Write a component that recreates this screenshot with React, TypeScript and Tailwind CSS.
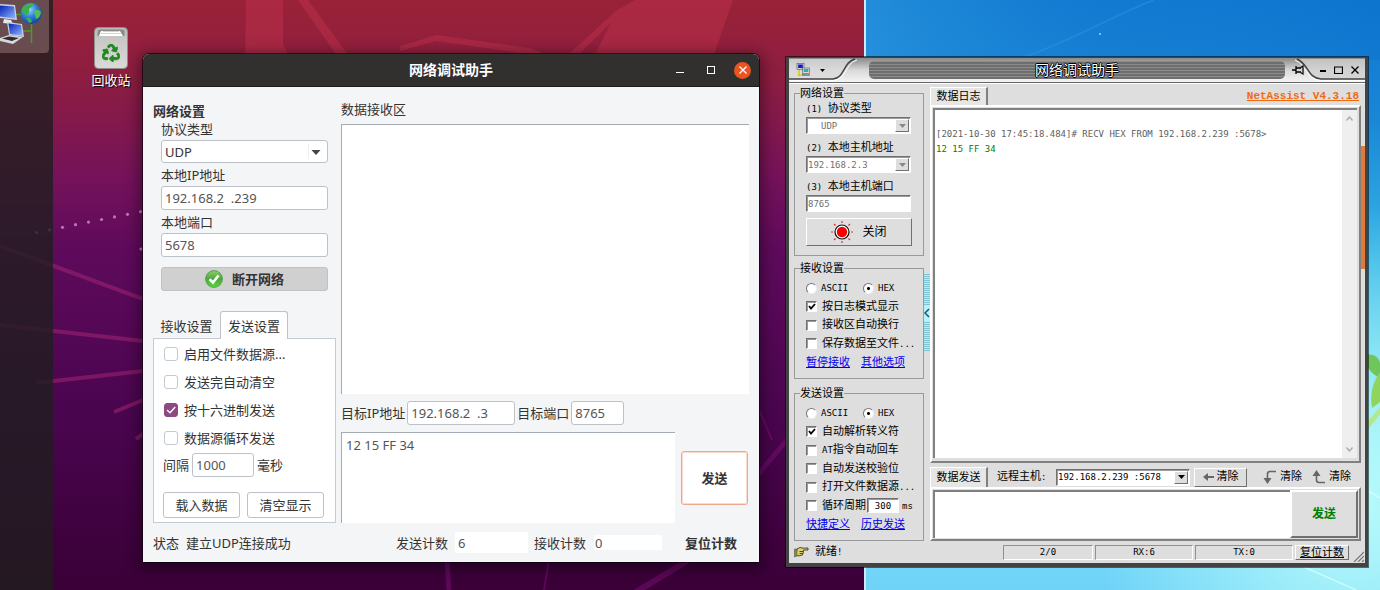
import { useState } from "react";
import type { ReactNode } from "react";
import { FaRecycle } from "react-icons/fa";

const ubuntuFont = "font-['Noto_Sans','Noto_Sans_CJK_SC',sans-serif]";
const winFont = "font-['DejaVu_Sans_Mono','Noto_Sans_CJK_SC',monospace]";

/* ---------- Wallpapers ---------- */

function UbuntuWallpaper() {
  const dots = Array.from({ length: 9 }, (_, i) => ({ x: 36.5 + i * 13, y: 232.5 - i * 2.6 }));
  return (
    <svg className="absolute inset-0 h-full w-full" viewBox="0 0 864 590" preserveAspectRatio="xMinYMin slice" aria-hidden="true">
      <defs>
        <linearGradient id="ub" x1="0" y1="0" x2="0" y2="1">
          <stop offset="0" stopColor="#9a2237" />
          <stop offset="0.14" stopColor="#8c1d42" />
          <stop offset="0.3" stopColor="#75125a" />
          <stop offset="0.42" stopColor="#5f0a5c" />
          <stop offset="0.7" stopColor="#4a054f" />
          <stop offset="1" stopColor="#3a0037" />
        </linearGradient>
      </defs>
      <rect width="864" height="590" fill="url(#ub)" />
      <g fill="#ba2f4a" opacity="0.55">
        <path d="M246 0H283V44L292 62H245Z" />
        <path d="M635 0H733L712 60H592L611 23L580 53H570L617 10Z" />
        <path d="M298 0H308L352 60H340Z" />
        <path d="M400 46L436 35L530 48L543 53H520L436 41L400 51Z" />
      </g>
      <g stroke="#9b2270" strokeWidth="4" opacity="0.6">
        <path d="M0 246L143 299" />
        <path d="M0 325L143 341" />
        <path d="M36 383L143 371" />
        <path d="M114 412L143 400" />
        <path d="M136 439L146 432" />
      </g>
      <g stroke="#7d0f76" opacity="0.5" fill="none">
        <path d="M447 560L449 590" strokeWidth="5" />
        <path d="M549 560L544 590" strokeWidth="2" />
        <path d="M692 558L636 592" strokeWidth="6" />
        <path d="M755 478L787 440" strokeWidth="5" />
        <path d="M755 400L772 440" strokeWidth="2" />
      </g>
      <g fill="#c070b8">
        {dots.map((d) => (
          <circle key={d.x} cx={d.x} cy={d.y} r="1.6" />
        ))}
        <circle cx="141" cy="249" r="1.6" />
      </g>
    </svg>
  );
}

function SevenWallpaper() {
  return (
    <svg className="absolute inset-0 h-full w-full" viewBox="0 0 516 590" preserveAspectRatio="none" aria-hidden="true">
      <defs>
        <linearGradient id="sky" x1="0" y1="0" x2="0" y2="1">
          <stop offset="0" stopColor="#0f78d0" />
          <stop offset="0.2" stopColor="#1a86d6" />
          <stop offset="0.45" stopColor="#39b8e8" />
          <stop offset="0.75" stopColor="#7fe3f5" />
          <stop offset="1" stopColor="#6fd3f8" />
        </linearGradient>
        <linearGradient id="glow" x1="0" y1="0" x2="1" y2="0">
          <stop offset="0" stopColor="#2f9be0" stopOpacity="0.6" />
          <stop offset="0.5" stopColor="#1a80d4" stopOpacity="0.2" />
          <stop offset="1" stopColor="#0b6fcc" stopOpacity="0.4" />
        </linearGradient>
        <radialGradient id="light" cx="0.95" cy="0.85" r="0.5">
          <stop offset="0" stopColor="#b8fbfb" />
          <stop offset="1" stopColor="#b8fbfb" stopOpacity="0" />
        </radialGradient>
      </defs>
      <rect width="516" height="590" fill="url(#sky)" />
      <rect width="516" height="60" fill="url(#glow)" />
      <rect width="516" height="590" fill="url(#light)" />
      <path d="M160 57C210 40 260 10 290 0" stroke="#3f9fe4" strokeWidth="2" fill="none" opacity="0.3" />
      <circle cx="236" cy="34" r="1" fill="#9fd4f5" />
      <path d="M500 355Q514 352 516 364V378Q502 372 500 355Z" fill="#6fc65a" />
      <path d="M516 372Q504 388 508 408L516 402Z" fill="#8fd45c" />
      <path d="M500 425L516 407V414L502 432Z" fill="#b4e890" />
      <path d="M502 490L516 498M440 567L492 590" stroke="#d2ffff" strokeWidth="1.5" opacity="0.8" />
      <rect width="2" height="590" fill="#cfe9fa" />
    </svg>
  );
}

/* ---------- Icons ---------- */

function NetworkIcon() {
  return (
    <svg className="h-[48px] w-[46px]" viewBox="0 0 46 48" aria-hidden="true">
      <defs>
        <linearGradient id="scr" x1="0" y1="0" x2="1" y2="1">
          <stop offset="0" stopColor="#0a22b8" />
          <stop offset="1" stopColor="#8fb8ff" />
        </linearGradient>
        <radialGradient id="globe" cx="0.4" cy="0.3" r="0.75">
          <stop offset="0" stopColor="#9fdcff" />
          <stop offset="0.5" stopColor="#2b7fd8" />
          <stop offset="1" stopColor="#0b3f9c" />
        </radialGradient>
      </defs>
      <path d="M16 14.5H22M31.5 22V43M22 31H31" stroke="#4f9a1c" strokeWidth="1.5" fill="none" />
      <path d="M0 4L15 5L17 20L0 18Z" fill="#c9d2de" />
      <path d="M0 5.5L14 6.5L15.5 18.5L0 16.5Z" fill="url(#scr)" />
      <path d="M4 19L11 20L13 24L3 23Z" fill="#e6e9ee" />
      <circle cx="31" cy="13.5" r="10.500" fill="url(#globe)" />
      <path d="M22 8Q28 3 34 4Q31 8 29 9Q30 14 26 15Q21 13 22 8Z" fill="#3fae4c" />
      <path d="M34 11Q38 8 41 12Q40 18 36 19Q35 15 34 11Z" fill="#58bc4e" />
      <path d="M26 18Q31 17 32 22L29 23Z" fill="#3fae4c" />
      <path d="M7 22L22 24L24 37L9 35Z" fill="#c9d2de" />
      <path d="M8.5 23.5L21 25L22.5 35.5L10 34Z" fill="url(#scr)" />
      <path d="M0 38L9 35L23 37L13 44L0 41Z" fill="#d5d8dc" />
      <path d="M2 38.5L9 36.5L19 38L12 41Z" fill="#2c2c30" />
    </svg>
  );
}

function TrashIcon() {
  return (
    <span className="relative flex h-[42px] w-[34px] items-center justify-center">
      <svg className="absolute inset-0 h-full w-full" viewBox="0 0 34 42" aria-hidden="true">
        <defs>
          <linearGradient id="bin" x1="0" y1="0" x2="0" y2="1">
            <stop offset="0" stopColor="#b9b9b7" />
            <stop offset="0.3" stopColor="#c8c8c7" />
            <stop offset="1" stopColor="#dadad9" />
          </linearGradient>
        </defs>
        <rect x="0.5" y="0.5" width="33" height="41" rx="4" fill="url(#bin)" stroke="#8e8e8c" />
        <path d="M3.5 9V4.5Q3.5 2.5 6 2.5H28Q30.5 2.5 30.5 4.5V9Z" fill="#8a8a88" />
        <path d="M5 9L7 4H26L29 9Z" fill="#fff" />
        <path d="M7 6.5H27M9 4.5H25" stroke="#c8c8c8" strokeWidth="0.8" />
      </svg>
      <FaRecycle className="relative mt-[10px] h-[18px] w-[18px] stroke-[#1f8a1c] stroke-[24px] text-[#1f8a1c]" aria-hidden="true" />
    </span>
  );
}

function OkIcon() {
  return (
    <svg className="h-[18px] w-[18px]" viewBox="0 0 18 18" aria-hidden="true">
      <defs>
        <linearGradient id="ok" x1="0" y1="0" x2="0" y2="1">
          <stop offset="0" stopColor="#8ccf6c" />
          <stop offset="0.5" stopColor="#4aa83c" />
          <stop offset="1" stopColor="#5cd83c" />
        </linearGradient>
      </defs>
      <circle cx="9" cy="9" r="8.4" fill="url(#ok)" stroke="#3d9a33" strokeWidth="0.8" />
      <path d="M4.5 9.2L8 12.5L13.5 5.5" stroke="#fff" strokeWidth="2.6" fill="none" />
    </svg>
  );
}

function LampIcon() {
  return (
    <svg className="h-[22px] w-[22px]" viewBox="0 0 22 22" aria-hidden="true">
      <g stroke="#e03030" strokeWidth="1.2">
        <path d="M11 0V2M11 20V22M0 11H2M20 11H22M3 3L4.5 4.5M17.5 17.5L19 19M3 19L4.5 17.5M17.5 4.5L19 3" />
      </g>
      <circle cx="11" cy="11" r="7" fill="#fff" stroke="#111" strokeWidth="1.2" />
      <circle cx="11" cy="11" r="5.2" fill="#fb0000" />
    </svg>
  );
}

function HandIcon() {
  return (
    <svg className="h-[12px] w-[15px]" viewBox="0 0 15 12" aria-hidden="true">
      <path d="M3 3L6 1.5L9 2.2L14 2V4H9.500V5.500L8.500 9L4 10L2 8.500Z" fill="#e0d468" stroke="#222" strokeWidth="0.8" />
      <path d="M5.5 5.5H9M5.5 7.5H8.5" stroke="#222" strokeWidth="0.8" />
      <path d="M0.5 3H3V10L0.5 11Z" fill="#8c8c2c" stroke="#555" strokeWidth="0.6" />
    </svg>
  );
}

function AppIcon() {
  return (
    <svg className="h-[14px] w-[15px]" viewBox="0 0 15 14" aria-hidden="true">
      <path d="M3 7V12H8" stroke="#c8c800" strokeWidth="1.2" fill="none" />
      <rect x="1" y="0.5" width="7" height="6" fill="#d0d0d0" stroke="#555" strokeWidth="0.6" />
      <rect x="2.2" y="1.5" width="4.6" height="3.5" fill="#1414d0" />
      <rect x="6.5" y="5" width="7" height="5.5" fill="#d8d8d8" stroke="#555" strokeWidth="0.6" />
      <rect x="7.7" y="6" width="4.6" height="3" fill="#18b8b8" />
      <path d="M6 12H14" stroke="#444" />
      <circle cx="3" cy="12" r="1.2" fill="#d8d000" />
    </svg>
  );
}

/* ---------- Ubuntu window ---------- */

const uInput =
  "h-6 rounded-[3px] border border-[#bcc2c8] bg-white px-[3px] text-[13px] text-[#555] outline-none";

function UCheck({ label, checked = false }: { label: string; checked?: boolean }) {
  const [on, setOn] = useState(checked);
  return (
    <label className="flex h-5 items-center gap-[6px]">
      <span className="relative flex h-[14px] w-[14px]">
        <input
          type="checkbox"
          checked={on}
          onChange={() => setOn(!on)}
          className="h-[14px] w-[14px] appearance-none rounded-[3px] border border-[#c3c9d0] bg-white checked:border-[#8d4a80] checked:bg-[#8d4a80]"
        />
        {on && (
          <svg className="pointer-events-none absolute inset-0" viewBox="0 0 14 14" aria-hidden="true">
            <path d="M3 7L6 9.8L11.2 4" stroke="#fff" strokeWidth="1.3" fill="none" />
          </svg>
        )}
      </span>
      {label}
    </label>
  );
}

function UbuntuWindow() {
  return (
    <section
      aria-label="网络调试助手"
      className={`absolute left-[143px] top-[54px] flex w-[616px] flex-col rounded-t-md bg-[#f3f5f7] text-[13px] leading-[18px] text-[#333] shadow-[0_3px_14px_4px_rgba(0,0,0,0.4),0_0_0_1px_rgba(20,0,20,0.7)] ${ubuntuFont}`}
    >
      <header className="relative flex h-[33px] items-center justify-end gap-[17px] rounded-t-md border-b border-[#1d1b1b] bg-[#322f2f] pr-2 text-white">
        <h1 className="pointer-events-none absolute inset-x-0 text-center text-[14px] font-bold">网络调试助手</h1>
        <button aria-label="最小化" className="flex h-4 w-4 items-center justify-center">
          <svg className="h-2 w-2" viewBox="0 0 8 8" aria-hidden="true"><path d="M0 6.5H8" stroke="#fff" /></svg>
        </button>
        <button aria-label="最大化" className="flex h-4 w-3 items-center justify-center">
          <svg className="h-2 w-2" viewBox="0 0 8 8" aria-hidden="true"><rect x="0.5" y="0.5" width="7" height="7" fill="none" stroke="#fff" /></svg>
        </button>
        <button aria-label="关闭窗口" className="flex h-[17px] w-[17px] items-center justify-center rounded-full bg-[#e95420]">
          <svg className="h-2 w-2" viewBox="0 0 8 8" aria-hidden="true"><path d="M0.5 0.5L7.5 7.5M7.5 0.5L0.5 7.5" stroke="#fff" strokeWidth="1.3" /></svg>
        </button>
      </header>

      <div className="flex gap-[5px] px-[10px]">
        <div className="flex w-[183px] flex-col pt-[15px]">
          <h2 className="font-bold">网络设置</h2>
          <div className="flex flex-col pl-2 pr-[8px]">
            <label htmlFor="u-proto">协议类型</label>
            <div className="relative mt-[2px]">
              <select id="u-proto" className="h-[23px] w-full appearance-none rounded-[3px] border border-[#bcc2c8] bg-white px-[3px] text-[13px] leading-4 text-[#333]">
                <option>UDP</option>
                <option>TCP</option>
              </select>
              <span className="pointer-events-none absolute bottom-1 right-[19px] top-1 w-px bg-[#eceef0]" />
              <svg className="pointer-events-none absolute right-[7px] top-[10px] h-[5px] w-[10px]" viewBox="0 0 10 5" aria-hidden="true">
                <path d="M0.5 0H9.5L5 5Z" fill="#444" />
              </svg>
            </div>
            <label htmlFor="u-ip" className="mt-[3px]">本地IP地址</label>
            <input id="u-ip" className={`mt-[2px] ${uInput}`} defaultValue="192.168.2  .239" />
            <label htmlFor="u-port" className="mt-[3px]">本地端口</label>
            <input id="u-port" className={`mt-[2px] ${uInput}`} defaultValue="5678" />
            <button className="mt-[10px] flex h-6 items-center justify-center gap-[9px] rounded-[3px] border border-[#c2c2c2] bg-[#d0d0d0] font-bold">
              <OkIcon />
              断开网络
            </button>
          </div>

          <div role="tablist" className="mt-5 flex h-[27px] items-end">
            <button role="tab" aria-selected="false" className="h-6 w-[67px]">接收设置</button>
            <button role="tab" aria-selected="true" className="relative -mb-px h-7 w-[68px] rounded-t-[3px] border border-b-0 border-[#bcc2c8] bg-white">发送设置</button>
          </div>
          <div role="tabpanel" className="flex h-[185px] flex-col border border-[#c6cbd1] bg-white pt-[5px]">
            <div className="flex flex-col gap-2 pl-[10px]">
              <UCheck label="启用文件数据源..." />
              <UCheck label="发送完自动清空" />
              <UCheck label="按十六进制发送" checked />
              <UCheck label="数据源循环发送" />
            </div>
            <div className="mt-[5px] flex items-center gap-[3px] pl-[9px]">
              <label htmlFor="u-gap">间隔</label>
              <input id="u-gap" className={`w-[62px] ${uInput}`} defaultValue="1000" />
              <span>毫秒</span>
            </div>
            <div className="mt-[15px] flex gap-[7px] pl-[9px]">
              <button className="h-[26px] w-[77px] rounded-[3px] border border-[#bcc2c8] bg-white">载入数据</button>
              <button className="h-[26px] w-[77px] rounded-[3px] border border-[#bcc2c8] bg-white">清空显示</button>
            </div>
          </div>
        </div>

        <div className="flex min-w-0 flex-1 flex-col pt-[13px]">
          <label htmlFor="u-recv">数据接收区</label>
          <textarea id="u-recv" readOnly className="mt-[6px] min-h-0 flex-1 resize-none border-l border-t border-[#a5abb2] bg-white outline-none" />
          <div className="my-[7px] flex h-6 items-center gap-[2px]">
            <label htmlFor="u-tip">目标IP地址</label>
            <input id="u-tip" className={`w-[108px] ${uInput}`} defaultValue="192.168.2  .3" />
            <label htmlFor="u-tport">目标端口</label>
            <input id="u-tport" className={`w-[53px] ${uInput}`} defaultValue="8765" />
          </div>
          <div className="flex h-[91px] items-center justify-between pr-px">
            <textarea aria-label="发送数据" className="h-full w-[334px] resize-none border-l border-t border-[#a5abb2] bg-white px-1 py-[3px] text-[#555] outline-none" defaultValue="12 15 FF 34" />
            <button className="h-[54px] w-[67px] rounded-[3px] border border-[#f0a58c] bg-white font-bold outline outline-1 -outline-offset-2 outline-[#fbd9cd]">发送</button>
          </div>
        </div>
      </div>

      <footer className="flex h-[39px] items-center pl-[10px] pr-[22px]">
        <span className="w-[33px]">状态</span>
        <span className="flex-1">建立UDP连接成功</span>
        <label htmlFor="u-tx" className="mr-[7px]">发送计数</label>
        <input id="u-tx" readOnly className="h-[21px] w-[73px] bg-white px-[3px] text-[#555] outline-none" defaultValue="6" />
        <label htmlFor="u-rx" className="ml-[6px] mr-2">接收计数</label>
        <input id="u-rx" readOnly className="h-[15px] w-[68px] bg-white px-px text-[#555] outline-none" defaultValue="0" />
        <button className="ml-[23px] font-bold">复位计数</button>
      </footer>
    </section>
  );
}

/* ---------- Windows-style window ---------- */

const sunken = "border border-b-white border-l-[#707070] border-r-white border-t-[#707070] bg-white shadow-[inset_1px_1px_0_#9a9a9a]";
const raised = "border border-b-[#707070] border-l-white border-r-[#707070] border-t-white bg-[#dedede]";
const cell = "border border-b-white border-l-[#909090] border-r-white border-t-[#909090] text-center";
const tab = "flex h-full w-[58px] items-center justify-center border-l border-r-2 border-t border-l-white border-r-[#808080] border-t-white bg-[#e6e6e6]";

function Latin({ children }: { children: ReactNode }) {
  return <span className="whitespace-pre text-[9px]">{children}</span>;
}

function Group({ title, className, children }: { title: string; className: string; children: ReactNode }) {
  return (
    <fieldset className={`m-0 flex min-w-0 flex-col border border-[#9a9a9a] px-[11px] ${className}`}>
      <legend className="-ml-[6px] h-3 p-0 leading-[14px]">{title}</legend>
      {children}
    </fieldset>
  );
}

function WinCombo({ id, value, wide = false, indent = false }: { id: string; value: string; wide?: boolean; indent?: boolean }) {
  return (
    <div className={wide ? "relative w-[134px]" : "relative mt-[2px] w-[105px]"}>
      <select
        id={id}
        className={`h-[17px] w-full appearance-none text-[9px] leading-3 ${indent ? "pl-[14px]" : "pl-px"} ${wide ? "text-black" : "text-[#707070]"} ${sunken}`}
      >
        <option>{value}</option>
      </select>
      <span className={`pointer-events-none absolute bottom-[2px] right-[2px] top-[2px] flex w-[14px] items-center justify-center ${raised}`}>
        <svg className="h-1 w-[7px]" viewBox="0 0 7 4" aria-hidden="true">
          <path d="M0 0H7L3.5 4Z" fill={wide ? "#000" : "#888"} />
        </svg>
      </span>
    </div>
  );
}

function WCheck({ children, checked = false }: { children: ReactNode; checked?: boolean }) {
  const [on, setOn] = useState(checked);
  return (
    <label className="flex h-[18px] items-center gap-[5px] whitespace-nowrap">
      <span className="relative flex h-[11px] w-[11px]">
        <input type="checkbox" checked={on} onChange={() => setOn(!on)} className={`h-[11px] w-[11px] appearance-none ${sunken}`} />
        {on && (
          <svg className="pointer-events-none absolute inset-0" viewBox="0 0 11 11" aria-hidden="true">
            <path d="M3 5L5 7.5L9 3" stroke="#000" strokeWidth="1.8" fill="none" />
          </svg>
        )}
      </span>
      <span className="leading-[14px]">{children}</span>
    </label>
  );
}

function Radios({ name }: { name: string }) {
  const radio =
    "h-[11px] w-[11px] appearance-none rounded-full border border-b-[#eee] border-l-[#777] border-r-[#eee] border-t-[#777] bg-white checked:bg-[radial-gradient(circle,#000_0_1px,#fff_2px)]";
  return (
    <div className="flex h-[18px] items-center text-[9px]">
      <label className="flex w-[57px] items-center gap-1">
        <input type="radio" name={name} className={radio} />
        ASCII
      </label>
      <label className="flex items-center gap-1">
        <input type="radio" name={name} defaultChecked className={radio} />
        HEX
      </label>
    </div>
  );
}

function Links({ a, b }: { a: string; b: string }) {
  return (
    <div className="flex gap-[11px] leading-[14px] text-[#0000ee] underline">
      <a href="#">{a}</a>
      <a href="#">{b}</a>
    </div>
  );
}

function NetAssistWindow() {
  return (
    <section
      aria-label="NetAssist"
      className={`absolute left-[786px] top-[57px] flex w-[582px] flex-col border-[3px] border-b-4 border-t border-[#434343] bg-[#dedede] text-[11px] leading-3 text-black shadow-[0_0_0_1px_rgba(0,0,0,0.55)] ${winFont}`}
    >
      <header className="flex h-[25px] items-start border-b border-[#666] bg-gradient-to-b from-[#8a8a8a] via-[#d8d8d8] to-[#f4f4f4]">
        <div className="relative flex h-full w-[80px] items-center gap-[9px] pl-[7px]">
          <svg className="absolute inset-0 h-full w-full" viewBox="0 0 80 24" preserveAspectRatio="none" aria-hidden="true">
            <path d="M0 21H44C56 20 54 4 66 1H0Z" fill="#d9d9d9" opacity="0.8" />
            <path d="M0 21H44C56 20 54 4 66 1" stroke="#444" strokeWidth="1.5" fill="none" />
            <path d="M0 22.5H45C58 21 56 5 68 2" stroke="#fff" fill="none" />
          </svg>
          <span className="relative"><AppIcon /></span>
          <svg className="relative h-[3px] w-[5px]" viewBox="0 0 5 3" aria-hidden="true"><path d="M0 0H5L2.5 3Z" /></svg>
        </div>
        <div className="mt-[3px] flex h-[18px] flex-1 items-center justify-center rounded-[5px] bg-[repeating-linear-gradient(to_bottom,#8c8c8c_0_1px,#6e6e6e_1px_3px)] pb-[2px]">
          <h1 className="font-['Noto_Sans_CJK_SC',sans-serif] text-[14px] leading-4 text-white [text-shadow:1px_0_#000,-1px_0_#000,0_1px_#000,0_-1px_#000]">网络调试助手</h1>
        </div>
        <div className="relative flex h-full w-[80px] items-center justify-between pl-[7px] pr-[6px]">
          <svg className="absolute inset-0 h-full w-full" viewBox="0 0 80 24" preserveAspectRatio="none" aria-hidden="true">
            <path d="M12 1C24 6 22 20 36 21H80V1Z" fill="#cfcfcf" opacity="0.8" />
            <path d="M12 1C24 6 22 20 36 21H80" stroke="#444" strokeWidth="1.5" fill="none" />
            <path d="M10 2C22 7 20 21 35 22.5H80" stroke="#fff" fill="none" />
          </svg>
          <button aria-label="置顶" className="relative flex">
            <svg className="h-[10px] w-[12px]" viewBox="0 0 12 10" aria-hidden="true">
              <path d="M0 5H4M4 1V9M4 3H9M4 7H9" stroke="#000" strokeWidth="1.3" fill="none" />
              <path d="M8.500 2.500L11 1V9L8.500 7.500" fill="none" stroke="#000" strokeWidth="1.2" />
            </svg>
          </button>
          <div className="relative flex items-center gap-2">
            <button aria-label="最小化" className="flex"><svg className="h-2 w-[6px]" viewBox="0 0 6 8" aria-hidden="true"><path d="M0 5H6" stroke="#000" strokeWidth="2" /></svg></button>
            <button aria-label="最大化" className="flex"><svg className="h-2 w-[9px]" viewBox="0 0 9 8" aria-hidden="true"><path d="M0.5 1V7.500H8.500V1M0 1H9" fill="none" stroke="#000" strokeWidth="1.2" /></svg></button>
            <button aria-label="关闭窗口" className="flex"><svg className="h-2 w-2" viewBox="0 0 8 8" aria-hidden="true"><path d="M0.5 0.5L7.5 7.5M7.5 0.5L0.5 7.5" stroke="#000" strokeWidth="1.3" /></svg></button>
          </div>
        </div>
      </header>

      <div className="flex border-t border-white pl-[5px]">
        <div className="flex w-[130px] flex-col pt-[3px]">
          <Group title="网络设置" className="h-[169px]">
            <label htmlFor="w-proto" className="mt-1"><Latin>(1) </Latin>协议类型</label>
            <WinCombo id="w-proto" value="UDP" indent />
            <label htmlFor="w-ip" className="mt-2"><Latin>(2) </Latin>本地主机地址</label>
            <WinCombo id="w-ip" value="192.168.2.3" />
            <label htmlFor="w-port" className="mt-2"><Latin>(3) </Latin>本地主机端口</label>
            <input id="w-port" className={`mt-[2px] h-[17px] w-[105px] px-px text-[9px] text-[#707070] outline-none ${sunken}`} defaultValue="8765" />
            <button className={`mt-[6px] flex h-7 w-[106px] items-center justify-center gap-[9px] ${raised}`}>
              <LampIcon />
              <span className="text-[12px]">关闭</span>
            </button>
          </Group>
          <Group title="接收设置" className="mt-[6px] h-[117px]">
            <div className="mb-[3px] mt-[5px] flex h-[74px] flex-col justify-between">
              <Radios name="w-recv" />
              <WCheck checked>按日志模式显示</WCheck>
              <WCheck>接收区自动换行</WCheck>
              <WCheck>保存数据至文件<Latin>...</Latin></WCheck>
            </div>
            <Links a="暂停接收" b="其他选项" />
          </Group>
          <Group title="发送设置" className="mt-[8px] h-[154px]">
            <div className="mb-[3px] mt-[5px] flex h-[111px] flex-col justify-between">
              <Radios name="w-send" />
              <WCheck checked>自动解析转义符</WCheck>
              <WCheck><Latin>AT</Latin>指令自动回车</WCheck>
              <WCheck>自动发送校验位</WCheck>
              <WCheck>打开文件数据源<Latin>...</Latin></WCheck>
              <div className="flex items-center">
                <WCheck>循环周期</WCheck>
                <input aria-label="循环周期 ms" className={`ml-px h-[15px] w-8 text-center text-[9px] outline-none ${sunken}`} defaultValue="300" />
                <span className="ml-[3px] text-[9px]">ms</span>
              </div>
            </div>
            <Links a="快捷定义" b="历史发送" />
          </Group>
        </div>

        <div className="flex w-[6px] flex-col pt-[190px]">
          <button aria-label="折叠侧栏" className="flex h-[78px] items-center justify-center bg-[repeating-linear-gradient(to_bottom,#7fc4d4_0_1px,#c4e6ee_1px_2px)]">
            <svg className="h-[16px] w-[6px] bg-[#bdf0f8]" viewBox="0 0 6 16" aria-hidden="true"><path d="M5 4L1 8L5 12" stroke="#0a5a78" strokeWidth="1.5" fill="none" /></svg>
          </button>
        </div>

        <div className="flex min-w-0 flex-1 flex-col pt-[3px]">
          <div className="flex h-[18px] items-center justify-between pr-[2px]">
            <h2 className={tab}>数据日志</h2>
            <a href="#" className="font-['Liberation_Mono',monospace] text-[11px] font-bold text-[#f26a10] underline">NetAssist V4.3.18</a>
          </div>
          <div className="flex h-[358px] flex-col border-2 border-b-[#808080] border-l-white border-r-[#808080] border-t-white p-px pb-[3px] pr-[2px]">
            <div className="flex flex-1 border-l-2 border-t-2 border-[#808080] bg-white">
              <div className="flex-1 whitespace-pre pl-px pt-[2px] text-[9px] leading-[15px]">
                <p>&nbsp;</p>
                <p className="text-[#606060]">[2021-10-30 17:45:18.484]# RECV HEX FROM 192.168.2.239 :5678&gt;</p>
                <p className="text-[#008000]">12 15 FF 34</p>
              </div>
              <div className="flex w-[15px] flex-col items-center justify-between bg-[#efefef] py-[6px]">
                <svg className="h-[5px] w-[7px]" viewBox="0 0 7 5" aria-hidden="true"><path d="M0.5 4.5L3.5 1L6.5 4.5" stroke="#aaa" strokeWidth="1.4" fill="none" /></svg>
                <svg className="h-[5px] w-[7px]" viewBox="0 0 7 5" aria-hidden="true"><path d="M0.5 0.5L3.5 4L6.5 0.5" stroke="#aaa" strokeWidth="1.4" fill="none" /></svg>
              </div>
            </div>
          </div>

          <div className="mt-[4px] flex h-[20px] items-center">
            <h2 className={tab}>数据发送</h2>
            <label htmlFor="w-host" className="ml-[9px] w-[59px]">远程主机<Latin>:</Latin></label>
            <WinCombo id="w-host" value="192.168.2.239 :5678" wide />
            <button className={`ml-1 flex h-[19px] w-[53px] items-center justify-center gap-[3px] ${raised}`}>
              <svg className="h-2 w-[11px]" viewBox="0 0 11 8" aria-hidden="true"><path d="M0 4L5 0V8ZM4 3H11V5H4Z" fill="#666" /></svg>
              清除
            </button>
            <button className="ml-[16px] flex items-center gap-[3px]">
              <svg className="h-[14px] w-[14px]" viewBox="0 0 14 14" aria-hidden="true"><path d="M13 1.5H7Q4.5 1.5 4.5 4V9" stroke="#666" strokeWidth="1.6" fill="none" /><path d="M0.5 8H8.5L4.5 14Z" fill="#666" /></svg>
              清除
            </button>
            <button className="ml-[10px] flex items-center gap-[3px]">
              <svg className="h-[14px] w-[14px]" viewBox="0 0 14 14" aria-hidden="true"><path d="M13 12.5H7Q4.5 12.5 4.5 10V5" stroke="#666" strokeWidth="1.6" fill="none" /><path d="M0.5 6H8.5L4.5 0Z" fill="#666" /></svg>
              清除
            </button>
          </div>
          <div className="flex h-[54px] border-2 border-b-[#808080] border-l-white border-r-[#808080] border-t-white p-px">
            <textarea aria-label="发送内容" className="min-w-0 flex-1 resize-none border-l-2 border-t-2 border-[#808080] bg-white text-[9px] outline-none" />
            <button className="w-[68px] border-2 border-b-[#707070] border-l-white border-r-[#707070] border-t-white bg-[#dedede] text-[12px] font-bold text-[#008000]">发送</button>
          </div>
        </div>
        <div className="flex w-[4px] flex-col pt-[62px]">
          <div className="h-[123px] bg-[#e07b3c]" />
        </div>
      </div>

      <footer className="flex h-[22px] items-center pl-[5px] pr-px">
        <HandIcon />
        <span className="ml-[6px] flex-1">就绪<Latin>!</Latin></span>
        <div className="flex h-[15px] gap-[2px] text-[9px] leading-[13px]">
          <span className={`w-[90px] ${cell}`}>2/0</span>
          <span className={`w-[98px] ${cell}`}>RX:6</span>
          <span className={`w-[98px] ${cell}`}>TX:0</span>
          <button className={`w-[54px] text-[11px] leading-[13px] underline ${raised}`}>复位计数</button>
        </div>
        <svg className="ml-1 mt-2 h-[11px] w-[11px]" viewBox="0 0 11 11" aria-hidden="true">
          <path d="M1 11L11 1M5 11L11 5M9 11L11 9" stroke="#777" strokeWidth="1.2" />
        </svg>
      </footer>
    </section>
  );
}

export default function App() {
  return (
    <main className="relative flex h-screen min-h-[570px] w-full overflow-hidden">
      <div className="relative flex w-[62.6%]">
        <UbuntuWallpaper />
        <nav aria-label="Dock" className="relative w-[53px] bg-[#1f1e1e]/80">
          <button aria-label="网络调试助手" className="flex h-[53px] w-[49px] items-start rounded-br-[4px] bg-[#9a7a7c]/50">
            <NetworkIcon />
          </button>
        </nav>
        <button className={`relative ml-[31px] mt-[27px] flex w-[54px] flex-col items-center self-start text-[13px] leading-5 text-white [text-shadow:1px_1px_1px_#000] ${ubuntuFont}`}>
          <TrashIcon />
          <span className="mt-px">回收站</span>
        </button>
      </div>
      <div className="relative flex-1">
        <SevenWallpaper />
      </div>
      <UbuntuWindow />
      <NetAssistWindow />
    </main>
  );
}
